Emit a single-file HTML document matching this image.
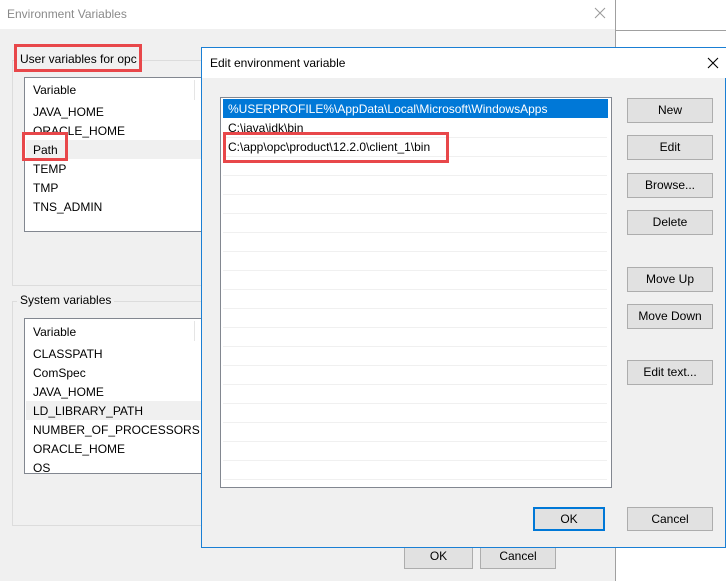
<!DOCTYPE html>
<html><head><style>
*{margin:0;padding:0;box-sizing:border-box}
body{width:726px;height:581px;position:relative;overflow:hidden;background:#fff;font-family:"Liberation Sans",sans-serif;font-size:12px;color:#000}
.a{position:absolute}
.btn{position:absolute;background:#e1e1e1;border:1px solid #adadad;text-align:center;line-height:22px;font-size:12px}
.row{position:absolute;left:8px;font-size:12px}
.red{position:absolute;border:3px solid #e8474a}
.line{position:absolute;left:2px;right:4px;height:1px;background:#f0f0f0}
</style></head><body>
<div class="a" style="left:0;top:0;width:615px;height:29px;background:#fff"></div>
<div class="a" style="left:7px;top:7px;color:#8a8a8a">Environment Variables</div>
<svg class="a" style="left:594px;top:7px" width="12" height="12"><path d="M1 1L11 11M11 1L1 11" stroke="#999" stroke-width="1"/></svg>
<div class="a" style="left:0;top:29px;width:615px;height:552px;background:#f0f0f0"></div>
<div class="a" style="left:615px;top:0;width:1px;height:581px;background:#a0a0a0"></div>
<div class="a" style="left:616px;top:30px;width:110px;height:1px;background:#a0a0a0"></div>
<div class="a" style="left:12px;top:60px;width:600px;height:226px;border:1px solid #dcdcdc"></div>
<div class="a" style="left:17px;top:52px;background:#f0f0f0;padding:0 3px">User variables for opc</div>
<div class="red" style="left:14px;top:44px;width:128px;height:28px"></div>
<div class="a" style="left:24px;top:77px;width:190px;height:155px;background:#fff;border:1px solid #828790">
 <div class="a" style="left:169px;top:2px;width:1px;height:20px;background:#e5e5e5"></div>
 <div class="row" style="top:5px">Variable</div>
 <div class="a" style="left:1px;top:62px;width:188px;height:19px;background:#f0f0f0"></div>
 <div class="row" style="top:27px">JAVA_HOME</div>
 <div class="row" style="top:46px">ORACLE_HOME</div>
 <div class="row" style="top:65px">Path</div>
 <div class="row" style="top:84px">TEMP</div>
 <div class="row" style="top:103px">TMP</div>
 <div class="row" style="top:122px">TNS_ADMIN</div>
</div>
<div class="red" style="left:22px;top:132px;width:46px;height:29px"></div>
<div class="a" style="left:12px;top:301px;width:600px;height:225px;border:1px solid #dcdcdc"></div>
<div class="a" style="left:17px;top:293px;background:#f0f0f0;padding:0 3px">System variables</div>
<div class="a" style="left:24px;top:318px;width:190px;height:156px;background:#fff;border:1px solid #828790;overflow:hidden">
 <div class="a" style="left:169px;top:2px;width:1px;height:20px;background:#e5e5e5"></div>
 <div class="row" style="top:6px">Variable</div>
 <div class="a" style="left:1px;top:82px;width:188px;height:19px;background:#f0f0f0"></div>
 <div class="row" style="top:28px">CLASSPATH</div>
 <div class="row" style="top:47px">ComSpec</div>
 <div class="row" style="top:66px">JAVA_HOME</div>
 <div class="row" style="top:85px">LD_LIBRARY_PATH</div>
 <div class="row" style="top:104px">NUMBER_OF_PROCESSORS</div>
 <div class="row" style="top:123px">ORACLE_HOME</div>
 <div class="row" style="top:142px">OS</div>
</div>
<div class="btn" style="left:404px;top:544px;width:69px;height:25px">OK</div>
<div class="btn" style="left:480px;top:544px;width:76px;height:25px">Cancel</div>
<div class="a" style="left:201px;top:47px;width:525px;height:501px;border:1px solid #1a7fd4;background:#f0f0f0">
 <div class="a" style="left:0;top:0;width:524px;height:30px;background:#fff"></div>
 <div class="a" style="left:8px;top:8px">Edit environment variable</div>
 <svg class="a" style="left:505px;top:9px" width="12" height="12"><path d="M1 1L11 11M11 1L1 11" stroke="#000" stroke-width="1.1"/></svg>
</div>
<div class="a" style="left:220px;top:97px;width:392px;height:391px;background:#fff;border:1px solid #828790">
 <div class="a" style="left:2px;top:1px;width:385px;height:19px;background:#0078d7"></div>
 <div class="a" style="left:7px;top:4px;color:#fff">%USERPROFILE%\AppData\Local\Microsoft\WindowsApps</div>
 <div class="a" style="left:7px;top:23px">C:\java\jdk\bin</div>
 <div class="a" style="left:7px;top:42px">C:\app\opc\product\12.2.0\client_1\bin</div>
 <div class="line" style="top:39px"></div><div class="line" style="top:58px"></div>
 <div class="line" style="top:77px"></div><div class="line" style="top:96px"></div>
 <div class="line" style="top:115px"></div><div class="line" style="top:134px"></div>
 <div class="line" style="top:153px"></div><div class="line" style="top:172px"></div>
 <div class="line" style="top:191px"></div><div class="line" style="top:210px"></div>
 <div class="line" style="top:229px"></div><div class="line" style="top:248px"></div>
 <div class="line" style="top:267px"></div><div class="line" style="top:286px"></div>
 <div class="line" style="top:305px"></div><div class="line" style="top:324px"></div>
 <div class="line" style="top:343px"></div><div class="line" style="top:362px"></div>
 <div class="line" style="top:381px"></div>
</div>
<div class="red" style="left:223px;top:132px;width:226px;height:31px"></div>
<div class="btn" style="left:627px;top:98px;width:86px;height:25px">New</div>
<div class="btn" style="left:627px;top:135px;width:86px;height:25px">Edit</div>
<div class="btn" style="left:627px;top:173px;width:86px;height:25px">Browse...</div>
<div class="btn" style="left:627px;top:210px;width:86px;height:25px">Delete</div>
<div class="btn" style="left:627px;top:267px;width:86px;height:25px">Move Up</div>
<div class="btn" style="left:627px;top:304px;width:86px;height:25px">Move Down</div>
<div class="btn" style="left:627px;top:360px;width:86px;height:25px">Edit text...</div>
<div class="btn" style="left:533px;top:507px;width:72px;height:24px;border:2px solid #0078d7;line-height:20px">OK</div>
<div class="btn" style="left:627px;top:507px;width:86px;height:24px">Cancel</div>
</body></html>
